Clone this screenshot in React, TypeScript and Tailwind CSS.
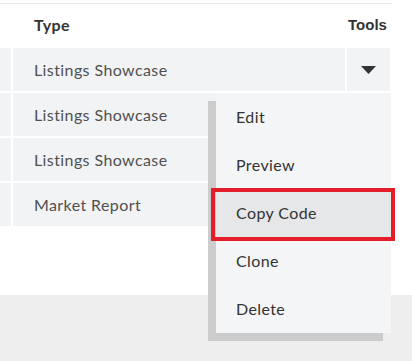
const rows = ['Listings Showcase', 'Listings Showcase', 'Listings Showcase', 'Market Report']

const menuItems = ['Edit', 'Preview', 'Copy Code', 'Clone', 'Delete']

function Caret() {
  return (
    <svg width="15" height="8" viewBox="0 0 15 8" className="block">
      <path d="M0 0 H15 L7.5 8 Z" fill="#333333" />
    </svg>
  )
}

export default function App() {
  return (
    <div className="relative w-[412px] h-[361px] bg-white overflow-hidden flex flex-col font-['Lato',sans-serif] tracking-[0.4px]">
      {/* Table */}
      <div className="pt-[3px] h-[295px]">
        <div className="w-[392px] border-t border-[#e6e6e6]">
          {/* Header */}
          <div className="flex h-[42px] items-center">
            <div className="w-[11px]" />
            <div className="w-[334px] pl-[23px] text-[16px] font-bold text-[#333333]">Type</div>
            <div className="w-[45px] flex justify-center text-[15px] font-bold text-[#333333] tracking-normal font-['Liberation_Sans',sans-serif]">
              Tools
            </div>
          </div>
          {/* Rows */}
          <div className="flex flex-col gap-[2px] pt-[2px]">
            {rows.map((label, i) => (
              <div key={i} className="flex gap-[2px] h-[43px]">
                <div className="w-[11px] bg-[#f2f3f5]" />
                <div className="w-[332px] bg-[#f2f3f5] flex items-center pl-[21px] text-[16px] text-[#505050]">
                  {label}
                </div>
                <div className="w-[43px] bg-[#f2f3f5] flex items-center justify-center">
                  {i === 0 && <Caret />}
                </div>
              </div>
            ))}
          </div>
        </div>
      </div>

      {/* Footer band */}
      <div className="flex-1 bg-[#eeeeee]" />

      {/* Dropdown menu */}
      <div className="absolute left-[216px] top-[93px] w-[175px] bg-[#f4f5f7] shadow-[-8px_8px_0_#cccccc]">
        {menuItems.map((item) => (
          <div
            key={item}
            className={`relative h-[48px] flex items-center pl-[20px] text-[16px] text-[#333333] ${
              item === 'Copy Code' ? 'bg-[#e6e7e9]' : ''
            }`}
          >
            {item}
            {item === 'Copy Code' && (
              <div className="absolute left-[-5px] top-[-1px] w-[184px] h-[53px] border-4 border-[#e31e2a]" />
            )}
          </div>
        ))}
      </div>
    </div>
  )
}
